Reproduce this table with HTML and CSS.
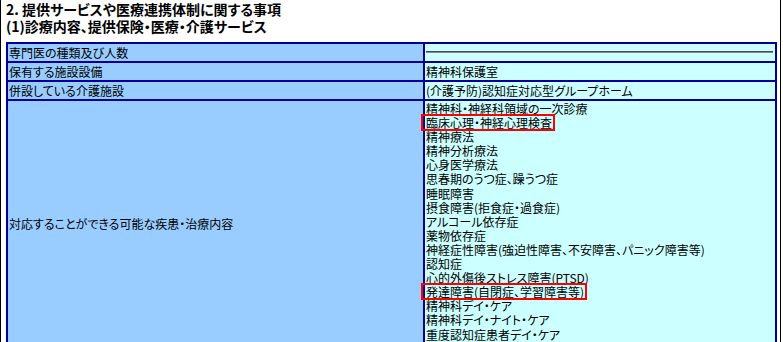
FILE: index.html
```html
<!DOCTYPE html>
<html lang="ja">
<head>
<meta charset="utf-8">
<title>提供サービスや医療連携体制に関する事項</title>
<link rel="stylesheet" href="styles.css">
</head>
<body>
<div class="page">
  <h2 class="heading">2. 提供サービスや医療連携体制に関する事項<br>(1)診療内容、提供保険・医療・介護サービス</h2>
  <table class="info">
    <tr>
      <td class="label">専門医の種類及び人数</td>
      <td class="value"><hr class="rule"></td>
    </tr>
    <tr>
      <td class="label">保有する施設設備</td>
      <td class="value">精神科保護室</td>
    </tr>
    <tr>
      <td class="label">併設している介護施設</td>
      <td class="value">(介護予防)認知症対応型グループホーム</td>
    </tr>
    <tr>
      <td class="label">対応することができる可能な疾患・治療内容</td>
      <td class="value list">
        <div class="item">精神科・神経科領域の一次診療</div>
        <div class="item"><span class="mark">臨床心理・神経心理検査</span></div>
        <div class="item">精神療法</div>
        <div class="item">精神分析療法</div>
        <div class="item">心身医学療法</div>
        <div class="item">思春期のうつ症、躁うつ症</div>
        <div class="item">睡眠障害</div>
        <div class="item">摂食障害(拒食症・過食症)</div>
        <div class="item">アルコール依存症</div>
        <div class="item">薬物依存症</div>
        <div class="item">神経症性障害(強迫性障害、不安障害、パニック障害等)</div>
        <div class="item">認知症</div>
        <div class="item">心的外傷後ストレス障害(PTSD)</div>
        <div class="item"><span class="mark">発達障害(自閉症、学習障害等)</span></div>
        <div class="item">精神科デイ・ケア</div>
        <div class="item">精神科デイ・ナイト・ケア</div>
        <div class="item">重度認知症患者デイ・ケア</div>
      </td>
    </tr>
  </table>
</div>
</body>
</html>
```
FILE: styles.css
```css
html, body {
  margin: 0;
  padding: 0;
  background: #ffffff;
}

body {
  font-family: "Noto Sans CJK JP", "Noto Sans", sans-serif;
  color: #000000;
}

.page {
  box-sizing: border-box;
  width: 781px;
  min-height: 100vh;
  border-left: 1px solid #000000;
  border-right: 1px solid #000000;
  padding: 1px 0 0 5px;
}

.heading {
  margin: 0 0 7px 0;
  font-size: 14px;
  font-weight: bold;
  line-height: 17px;
  font-feature-settings: "palt";
  color: #000000;
}

.info {
  table-layout: fixed;
  width: 771px;
  border-collapse: separate;
  border-spacing: 0;
  border: 1px solid #000099;
  font-size: 12px;
  font-feature-settings: "palt";
}

.info td {
  box-sizing: border-box;
  border: 1px solid #000099;
  padding: 1px 1px;
  line-height: 15px;
  vertical-align: middle;
  white-space: nowrap;
}

.info td.label {
  width: 417px;
  background: #99ccff;
}

.info td.value {
  width: 352px;
  background: #ccffff;
  padding-left: 1px;
}

.info td.list {
  line-height: 14.1px;
  padding-bottom: 4px;
}

.rule {
  margin: 6px 1px 7px 0;
  height: 0;
  border: 0;
  border-top: 1px solid #4a4a4a;
  border-bottom: 1px solid #8a8a8a;
}

.mark {
  position: relative;
  display: inline-block;
}

.mark::after {
  content: "";
  position: absolute;
  left: -5px;
  right: -3px;
  top: -2px;
  bottom: -1px;
  border: 2px solid #ff0000;
}
```
